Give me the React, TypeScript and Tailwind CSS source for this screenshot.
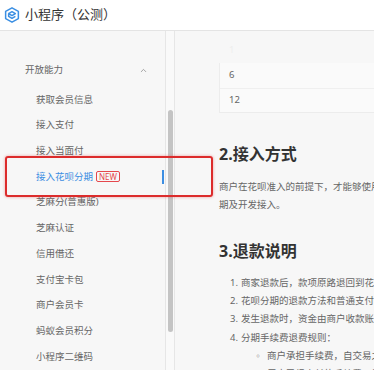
import { ChevronUp } from "lucide-react";

const menu = [
  "获取会员信息",
  "接入支付",
  "接入当面付",
  "接入花呗分期",
  "芝麻分(普惠版)",
  "芝麻认证",
  "信用借还",
  "支付宝卡包",
  "商户会员卡",
  "蚂蚁会员积分",
  "小程序二维码",
];

const refunds = [
  "商家退款后，款项原路退回到花呗账户，用户可在花呗账单中查看退款记录。",
  "花呗分期的退款方法和普通支付宝交易的退款方法一致。",
  "发生退款时，资金由商户收款账户原路退回。",
  "分期手续费退费规则：",
];

function Logo() {
  return (
    <svg width="18" height="18" viewBox="0 0 24 24" fill="none" stroke="#3b8fe3" strokeWidth="2" strokeLinejoin="round">
      <path d="M12 2.5 20.5 7.2v9.6L12 21.5 3.5 16.8V7.2Z" />
      <path d="M7.5 10.2 12 7.6l4.5 2.6-4.5 2.6-4.5-2.6v3.6l4.5 2.6 4.5-2.6" />
    </svg>
  );
}

function Sidebar() {
  return (
    <div className="w-[166px] shrink-0 border-r border-[#e6e6e6] pt-[26px] text-[9.5px] text-[#666]">
      <div className="flex h-[26px] items-center justify-between pl-[25px] pr-[17px]">
        <span>开放能力</span>
        <ChevronUp size={9} strokeWidth={2} className="text-[#888]" />
      </div>
      <div className="mt-[4px]">
        {menu.map((m) => {
          const active = m === "接入花呗分期";
          return (
            <div key={m} className="flex h-[25.7px] items-center justify-between pl-[36px]">
              <div className="flex items-center gap-[3px]">
                <span className={active ? "text-[#3d8ee2]" : ""}>{m}</span>
                {active && (
                  <span className="rounded-[2px] border border-[#e5484d] px-[2px] text-[8px] leading-[9px] text-[#e5484d]">
                    NEW
                  </span>
                )}
              </div>
              {active && <div className="mr-[1px] h-[14px] w-[2px] bg-[#3d8ee2]" />}
            </div>
          );
        })}
      </div>
    </div>
  );
}

function Scrollbar() {
  return (
    <div className="w-[9px] shrink-0 border-r border-[#e6e6e6] bg-[#f9f9f9] pl-[2px] pt-[79px]">
      <div className="h-[222px] w-[5px] rounded-full bg-[#c4c4c4]" />
    </div>
  );
}

function Content() {
  return (
    <div className="w-[600px] shrink-0 pl-[44px] pt-[7px] text-[9.5px] text-[#666]">
      <div className="flex h-[25px] items-center pl-[10px] text-[#eee]">1</div>
      <div className="border-l border-b border-[#ececec] bg-[#fafafa]">
        <div className="flex h-[26px] items-center border-b border-[#efefef] pl-[9px]">6</div>
        <div className="flex h-[23px] items-center pl-[9px]">12</div>
      </div>

      <h2 className="mt-[29px] text-[16px] font-bold leading-[24px] text-[#333]">2.接入方式</h2>
      <p className="mt-[12px] whitespace-nowrap leading-[18px]">
        商户在花呗准入的前提下，才能够使用花呗分期功能，请先完成签约后再进行花呗分
        <br />
        期及开发接入。
      </p>

      <h2 className="mt-[25px] text-[16px] font-bold leading-[24px] text-[#333]">3.退款说明</h2>
      <div className="mt-[11px] leading-[18.2px]">
        {refunds.map((r, i) => (
          <div key={r} className="flex whitespace-nowrap">
            <span className="w-[22px] pl-[11px]">{i + 1}.</span>
            <span>{r}</span>
          </div>
        ))}
        <div className="flex whitespace-nowrap">
          <span className="w-[48px] pl-[35px] text-[8px]">◦</span>
          <div>
            <div>商户承担手续费，自交易之日起计算，退款时手续费不退还。</div>
            <div>用户已经支付的手续费，按照实际情况退还。</div>
          </div>
        </div>
      </div>
    </div>
  );
}

export default function App() {
  return (
    <div
      className="relative h-[370px] w-[374px] overflow-hidden bg-[#f7f7f7]"
      style={{ fontFamily: '"Noto Sans", "Noto Sans CJK SC", sans-serif' }}
    >
      <header className="flex h-[31px] items-center gap-[4px] border-b border-[#e4e4e4] bg-white pl-[3px]">
        <Logo />
        <span className="text-[13px] text-[#333]">小程序（公测）</span>
      </header>
      <div className="flex h-[339px]">
        <Sidebar />
        <Scrollbar />
        <Content />
      </div>
      <div className="absolute left-[5px] top-[156px] h-[41px] w-[208px] rounded-[3px] border-2 border-[#dc2c2c] shadow-[0_0_3px_rgba(220,44,44,0.45)]" />
    </div>
  );
}
